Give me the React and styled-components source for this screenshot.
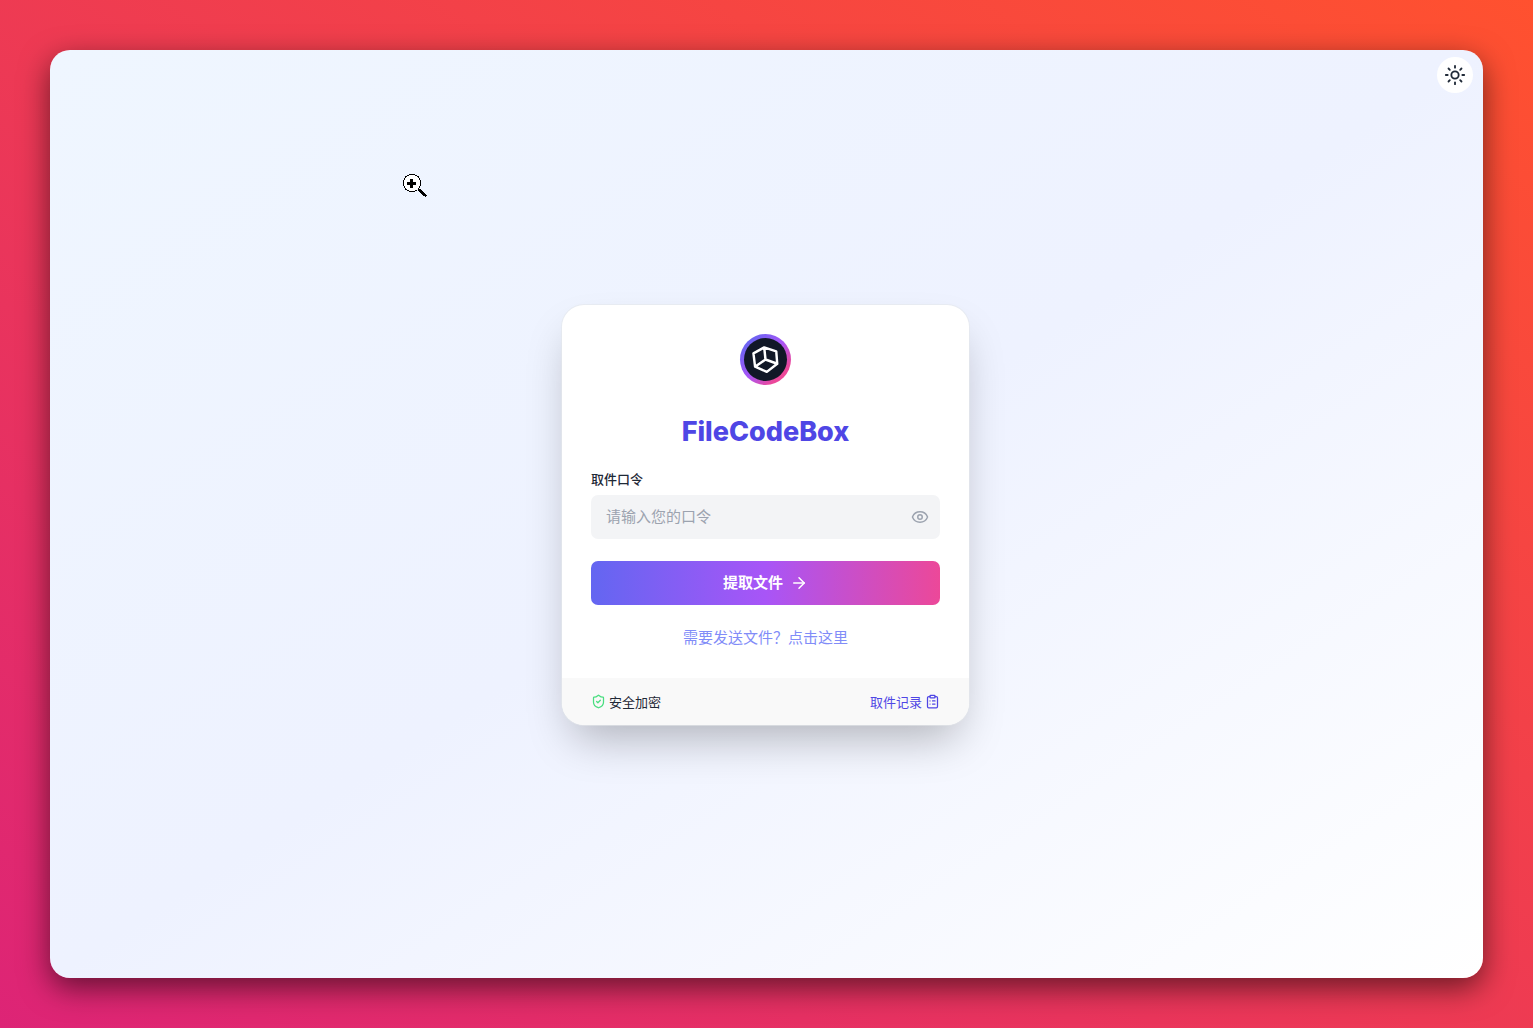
import React, { useState } from "react";
import styled, { createGlobalStyle } from "styled-components";
import { ArrowRight, ClipboardList, Eye, ShieldCheck, Sun } from "lucide-react";

const GlobalStyle = createGlobalStyle`
  *, *::before, *::after { box-sizing: border-box; }
  body {
    margin: 0;
    font-family: Inter, "Noto Sans CJK SC", sans-serif;
    color: #1f2937;
  }
  button, input { font: inherit; }
`;

const Backdrop = styled.div`
  display: flex;
  min-height: 100vh;
  padding: 50px;
  background: linear-gradient(to top right, #dd2476, #ff512f);
`;

const Window = styled.main`
  position: relative;
  flex: 1;
  display: grid;
  place-items: center;
  padding: 2px 2px 0 0;
  border-radius: 20px;
  background: linear-gradient(to bottom right, #eff6ff, #eef2ff, #ffffff);
  box-shadow: 0 10px 30px rgba(0, 0, 0, 0.55);
`;

const ThemeButton = styled.button`
  position: absolute;
  top: 7px;
  right: 10px;
  display: grid;
  place-items: center;
  width: 36px;
  height: 36px;
  padding: 0;
  border: 0;
  border-radius: 50%;
  background: #ffffff;
  color: #1f2937;
  cursor: pointer;
`;

const ZoomCursor = styled.svg`
  position: absolute;
  left: 353px;
  top: 124px;
  pointer-events: none;
`;

const Card = styled.section`
  width: 100%;
  max-width: 407px;
  border-radius: 22px;
  overflow: hidden;
  background: #ffffff;
  box-shadow: 0 0 0 1px rgba(229, 231, 235, 0.6), 0 23px 45px -11px rgba(0, 0, 0, 0.28);
`;

const CardBody = styled.form`
  display: flex;
  flex-direction: column;
  padding: 29px;
`;

const Logo = styled.div`
  align-self: center;
  display: grid;
  width: 51px;
  height: 51px;
  padding: 4px;
  border-radius: 50%;
  background: linear-gradient(to bottom right, #6366f1 10%, #a855f7 50%, #ec4899 80%);
`;

const LogoFace = styled.div`
  display: grid;
  place-items: center;
  border-radius: 50%;
  background: #111827;
`;

const Title = styled.h1`
  margin: 29px 0 20px;
  text-align: center;
  font-size: 27px;
  line-height: 36px;
  font-weight: 800;
  color: #4f46e5;
`;

const Label = styled.label`
  margin-bottom: 7px;
  font-size: 13px;
  line-height: 18px;
  font-weight: 500;
`;

const Field = styled.div`
  display: flex;
  align-items: center;
  height: 44px;
  padding: 0 11px 0 15px;
  border-radius: 7px;
  background: #f3f4f6;
`;

const CodeInput = styled.input`
  flex: 1;
  min-width: 0;
  padding: 0;
  border: 0;
  outline: 0;
  background: transparent;
  font-size: 15px;
  line-height: 22px;
  color: #1f2937;
  &::placeholder { color: #9ca3af; opacity: 1; }
`;

const RevealButton = styled.button`
  display: grid;
  padding: 0;
  border: 0;
  background: transparent;
  color: #9ca3af;
  cursor: pointer;
`;

const SubmitButton = styled.button`
  display: flex;
  align-items: center;
  justify-content: center;
  gap: 7px;
  height: 44px;
  margin: 22px 0;
  padding: 0;
  border: 0;
  border-radius: 7px;
  background: linear-gradient(to right, #6366f1, #a855f7, #ec4899);
  color: #ffffff;
  font-size: 15px;
  line-height: 22px;
  font-weight: 700;
  cursor: pointer;
`;

const SendLink = styled.a`
  align-self: center;
  font-size: 15px;
  line-height: 22px;
  color: #818cf8;
  text-decoration: none;
`;

const CardFooter = styled.footer`
  display: flex;
  align-items: center;
  justify-content: space-between;
  height: 47px;
  padding: 0 29px;
  background: #f9f9f9;
  font-size: 13px;
  line-height: 18px;
`;

const Secure = styled.span`
  display: flex;
  align-items: center;
  gap: 3px;
  svg { color: #4ade80; }
`;

const RecordsLink = styled.a`
  display: flex;
  align-items: center;
  gap: 3px;
  color: #4f46e5;
  text-decoration: none;
`;

function CubeMark() {
  return (
    <svg width="43" height="43" viewBox="0 0 132 132" fill="none" stroke="#fff" strokeWidth="7.5" strokeLinejoin="round" strokeLinecap="round" aria-hidden="true">
      <path d="M62 29 L99 41 L102 79 L70 104 L34 88 L29 47 Z M62 29 L66 66 L34 88 M66 66 L102 79" />
    </svg>
  );
}

function MagnifierCursor() {
  return (
    <ZoomCursor width="25" height="25" viewBox="0 0 25 25" shapeRendering="crispEdges" aria-hidden="true">
      <path d="M6 1h6v1h2v1h1v1h1v2h1v6h-1v2h-1v1h-1v1h-2v1H6v-1H4v-1H3v-1H2v-2H1V6h1V4h1V3h1V2h2z" fill="#fff" />
      <path d="M6 0h6v1H6zM4 1h2v1H4zM12 1h2v1h-2zM2 2h2v1H2zM14 2h2v1h-2zM2 3h1v1H2zM15 3h1v1h-1zM1 4h1v2H1zM16 4h1v2h-1zM0 6h1v6H0zM17 6h1v6h-1zM1 12h1v2H1zM16 12h1v2h-1zM2 14h1v2H2zM15 14h1v2h-1zM3 15h1v1H3zM4 16h2v1H4zM12 16h2v1h-2zM6 17h6v1H6z" fill="#000" />
      <path d="M7 5h3v3h3v3h-3v3H7v-3H4V8h3z" fill="#000" />
      <path d="M15 15h3v1h1v1h1v1h1v1h1v1h1v1h1v1h-1v1h-1v-1h-2v-1h-1v-1h-1v-1h-1v-1h-1v-1h-1z" fill="#000" />
    </ZoomCursor>
  );
}

export default function App() {
  const [code, setCode] = useState("");
  const [hidden, setHidden] = useState(false);

  return (
    <>
      <GlobalStyle />
      <Backdrop>
        <Window>
          <ThemeButton type="button" aria-label="切换主题">
            <Sun size={22} />
          </ThemeButton>
          <MagnifierCursor />
          <Card>
            <CardBody onSubmit={(e) => e.preventDefault()}>
              <Logo>
                <LogoFace>
                  <CubeMark />
                </LogoFace>
              </Logo>
              <Title>FileCodeBox</Title>
              <Label htmlFor="code">取件口令</Label>
              <Field>
                <CodeInput
                  id="code"
                  type={hidden ? "password" : "text"}
                  placeholder="请输入您的口令"
                  value={code}
                  onChange={(e) => setCode(e.target.value)}
                />
                <RevealButton type="button" aria-label="显示口令" onClick={() => setHidden(!hidden)}>
                  <Eye size={18} />
                </RevealButton>
              </Field>
              <SubmitButton type="submit">
                提取文件
                <ArrowRight size={18} />
              </SubmitButton>
              <SendLink href="#send">需要发送文件？点击这里</SendLink>
            </CardBody>
            <CardFooter>
              <Secure>
                <ShieldCheck size={15} />
                安全加密
              </Secure>
              <RecordsLink href="#records">
                取件记录
                <ClipboardList size={15} />
              </RecordsLink>
            </CardFooter>
          </Card>
        </Window>
      </Backdrop>
    </>
  );
}
